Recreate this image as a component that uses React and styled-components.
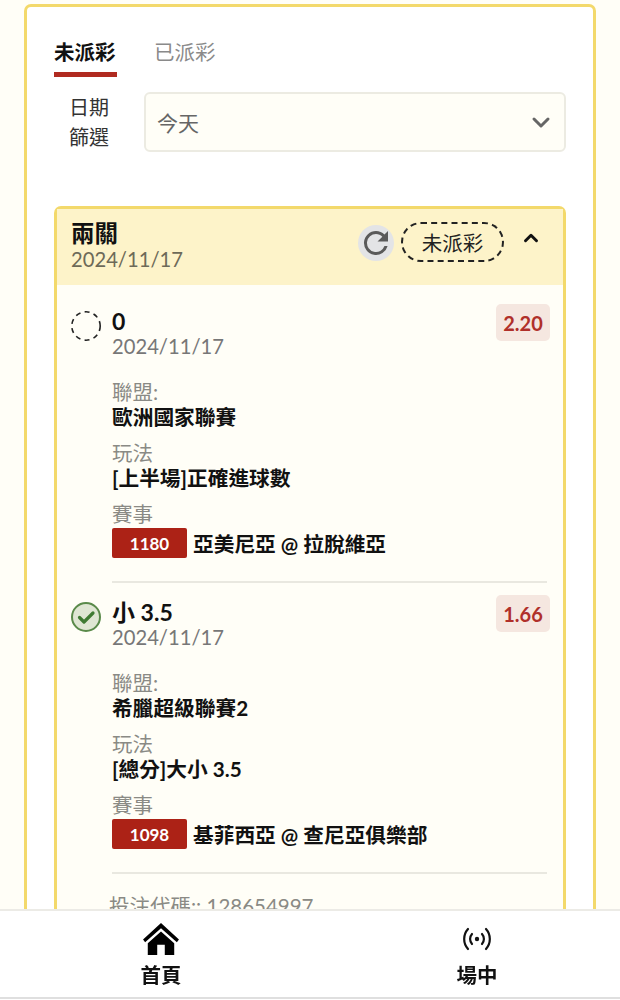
import React from "react";
import styled, { createGlobalStyle } from "styled-components";

const Global = createGlobalStyle`
  html, body { margin: 0; padding: 0; height: 1000px; overflow: hidden; background: #fffef7; }
  * { box-sizing: border-box; }
  body { font-family: Lato, "Noto Sans CJK TC", sans-serif; color: #000; }
`;
const Page = styled.div`
  height: 1000px; overflow: hidden; padding: 4px 24px 0;
`;
const Panel = styled.main`
  background: #fff; border: 3px solid #f3d96b; border-radius: 7px;
  padding: 29px 27px 0; min-height: 1100px;
`;
const Tabs = styled.div`display: flex; gap: 37px; height: 41px;`;
const Tab = styled.div`
  height: 41px; width: 63px; font-size: 20.5px; line-height: 32px; white-space: nowrap;
  font-weight: ${p => (p.$active ? 700 : 400)};
  color: ${p => (p.$active ? "#111" : "#8a8a8a")};
  border-bottom: ${p => (p.$active ? "5px solid #b02a20" : "none")};
`;
const Filter = styled.div`
  display: flex; align-items: center; margin-top: 15px; height: 60px;
`;
const FilterLabel = styled.div`
  width: 90px; padding-left: 15px; font-size: 20px; line-height: 30px; color: #333;
`;
const Select = styled.div`
  flex: 1; height: 60px; background: #fffef7; border: 2px solid #ecebe2; border-radius: 6px;
  display: flex; align-items: center; justify-content: space-between;
  padding: 0 11px; font-size: 21px; color: #666;
`;
const Section = styled.section`
  margin-top: 54px; border: 3px solid #f3d96b; border-bottom: 0; border-radius: 7px 7px 0 0;
  background: #fffef7;
`;
const SectionHead = styled.header`
  height: 76px; background: #fdf3c9; padding: 10px 14px 0; display: flex; align-items: flex-start;
`;
const HeadText = styled.div`flex: 1;`;
const HeadTitle = styled.div`font-size: 23.5px; line-height: 28px; font-weight: 700; color: #111;`;
const HeadDate = styled.div`font-size: 20.2px; line-height: 24px; color: #6d6a58;`;
const Refresh = styled.div`
  width: 36px; height: 36px; border-radius: 50%; background: #e3e4e6; margin: 6px 7px 0 0;
  display: flex; align-items: center; justify-content: center; color: #555;
`;
const Status = styled.div`
  width: 103px; height: 40px; margin-top: 3px; border: 2px dashed #222; border-radius: 20px;
  display: flex; align-items: center; justify-content: center; font-size: 20.5px; color: #222;
`;
const Caret = styled.div`width: 36px; margin-left: 9px; padding-top: 8px; display: flex; justify-content: center; color: #111;`;
const SectionBody = styled.div`padding: 16px 13px 0 14px;`;
const Item = styled.article`display: flex; height: 291px;`;
const Mark = styled.div`width: 41px; padding-top: 9px; margin-left: -1px; margin-right: 1px; flex: none;`;
const ItemMain = styled.div`flex: 1; min-width: 0;`;
const TitleRow = styled.div`display: flex; justify-content: space-between; align-items: flex-start;`;
const ItemTitle = styled.div`font-size: 23px; line-height: 28px; font-weight: 700; color: #111; margin-top: 6px;`;
const ItemDate = styled.div`font-size: 20.2px; line-height: 24px; color: #777; margin-top: -1px;`;
const Odds = styled.div`
  width: 54px; height: 37px; margin-top: 3px; border-radius: 5px; background: #f5e7e0; color: #b0302a;
  font-size: 20px; font-weight: 700; display: flex; align-items: center; justify-content: center;
`;
const TitleBlock = styled.div``;
const Fields = styled.div`margin-top: 22px;`;
const Field = styled.div`margin-bottom: 11px;`;
const FieldLabel = styled.div`font-size: 20.5px; line-height: 25px; color: #8a8a85;`;
const FieldValue = styled.div`font-size: 20.7px; line-height: 25px; font-weight: 700; color: #111;`;
const Match = styled.div`display: flex; align-items: center; gap: 6px; height: 30px; margin-top: 1px; font-size: 20.7px; font-weight: 700; color: #111;`;
const Code = styled.span`
  width: 75px; height: 30px; background: #ac2216; color: #fff; border-radius: 2px;
  display: flex; align-items: center; justify-content: center; font-size: 17px; font-weight: 700;
`;
const Divider = styled.hr`border: 0; border-top: 2px solid #e9e8e0; margin: 23px 3px 0 0;`;
const Bet = styled.div`font-size: 20.5px; line-height: 26px; color: #8a8a85; margin: 10px 0 0 38px;`;
const Nav = styled.nav`
  position: fixed; left: 0; right: 0; top: 909px; bottom: 0; background: #fff;
  border-top: 2px solid #ecebe6; box-shadow: inset 0 -1px #fff, inset 0 -3px #dfdfdf;
  display: flex; padding-left: 3px;
`;
const NavItem = styled.div`
  width: 316px; flex: none; height: 100%; display: flex; flex-direction: column; align-items: center;
  font-size: 20.5px; font-weight: 700; color: #111; line-height: 32px;
`;
const NavIcon = styled.div`height: 48px; display: flex; align-items: flex-end; justify-content: center; padding-bottom: 2px;`;

const Chevron = ({ size = 24, w = 3, up }) => (
  <svg width={size} height={size} viewBox="0 0 24 24" fill="none" stroke="currentColor" strokeWidth={w} strokeLinecap="round" strokeLinejoin="round">
    <path d={up ? "M6 15l6-6 6 6" : "M5 9l7 7 7-7"} />
  </svg>
);
const RefreshIcon = () => (
  <svg width="36" height="36" viewBox="0 0 24 24" fill="#5a5a5a">
    <path d="M17.65 6.35A7.96 7.96 0 0 0 12 4a8 8 0 1 0 7.73 10h-2.08A6 6 0 1 1 12 6c1.66 0 3.14.69 4.22 1.78L13 11h7V4l-2.35 2.35z" />
  </svg>
);
const Pending = () => (
  <svg width="32" height="32" viewBox="0 0 32 32" fill="none" stroke="#222" strokeWidth="1.6" strokeDasharray="5 4.3">
    <circle cx="16" cy="16" r="14.2" />
  </svg>
);
const Won = () => (
  <svg width="32" height="32" viewBox="0 0 32 32" fill="none">
    <circle cx="16" cy="16" r="14" fill="#dfe6d3" stroke="#5a8a4a" strokeWidth="2" />
    <path d="M9.5 16.5l4.5 4.5 9-9" stroke="#3f7a32" strokeWidth="3.2" strokeLinecap="round" strokeLinejoin="round" />
  </svg>
);
const Home = () => (
  <svg width="38" height="34" viewBox="0 0 38 36" fill="#000">
    <path d="M19 0L0 17.5l2.2 3L19 5.5l16.8 15 2.2-3z" />
    <path d="M19 9L5 21.5V34h10V23h8v11h10V21.5z" />
  </svg>
);
const Live = () => (
  <svg width="32" height="36" viewBox="0 0 32 36" fill="none" stroke="#111" strokeWidth="2.2" strokeLinecap="round">
    <circle cx="16" cy="18" r="2.2" fill="#111" stroke="none" />
    <path d="M11 13a7.5 7.5 0 0 0 0 10M21 13a7.5 7.5 0 0 1 0 10M7 8a15 15 0 0 0 0 20M25 8a15 15 0 0 1 0 20" />
  </svg>
);

const items = [
  { title: "0", odds: "2.20", won: false, league: "歐洲國家聯賽", play: "[上半場]正確進球數", code: "1180", match: "亞美尼亞 @ 拉脫維亞" },
  { title: "小 3.5", odds: "1.66", won: true, league: "希臘超級聯賽2", play: "[總分]大小 3.5", code: "1098", match: "基菲西亞 @ 查尼亞俱樂部" },
];

export default function App() {
  return (
    <>
      <Global />
      <Page>
        <Panel>
          <Tabs>
            <Tab $active>未派彩</Tab>
            <Tab>已派彩</Tab>
          </Tabs>
          <Filter>
            <FilterLabel>日期<br />篩選</FilterLabel>
            <Select>今天<Chevron /></Select>
          </Filter>
          <Section>
            <SectionHead>
              <HeadText>
                <HeadTitle>兩關</HeadTitle>
                <HeadDate>2024/11/17</HeadDate>
              </HeadText>
              <Refresh><RefreshIcon /></Refresh>
              <Status>未派彩</Status>
              <Caret><Chevron up size={22} w={3.2} /></Caret>
            </SectionHead>
            <SectionBody>
              {items.map(it => (
                <Item key={it.code}>
                  <Mark>{it.won ? <Won /> : <Pending />}</Mark>
                  <ItemMain>
                    <TitleRow>
                      <TitleBlock>
                        <ItemTitle>{it.title}</ItemTitle>
                        <ItemDate>2024/11/17</ItemDate>
                      </TitleBlock>
                      <Odds>{it.odds}</Odds>
                    </TitleRow>
                    <Fields>
                      <Field><FieldLabel>聯盟:</FieldLabel><FieldValue>{it.league}</FieldValue></Field>
                      <Field><FieldLabel>玩法</FieldLabel><FieldValue>{it.play}</FieldValue></Field>
                      <FieldLabel>賽事</FieldLabel>
                      <Match><Code>{it.code}</Code>{it.match}</Match>
                    </Fields>
                    <Divider />
                  </ItemMain>
                </Item>
              ))}
              <Bet>投注代碼:: 128654997</Bet>
            </SectionBody>
          </Section>
        </Panel>
      </Page>
      <Nav>
        <NavItem><NavIcon><Home /></NavIcon>首頁</NavItem>
        <NavItem><NavIcon><Live /></NavIcon>場中</NavItem>
      </Nav>
    </>
  );
}
